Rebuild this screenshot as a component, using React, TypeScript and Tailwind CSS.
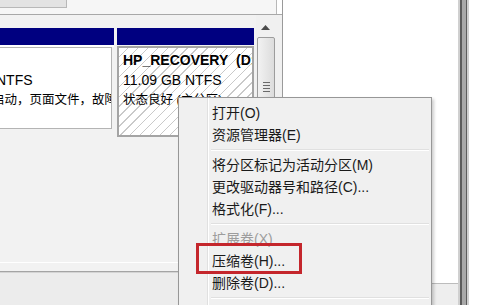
import React from 'react';

type MenuEntry =
  | { kind: 'item'; label: string; disabled?: boolean }
  | { kind: 'sep' };

const menu: MenuEntry[] = [
  { kind: 'item', label: '打开(O)' },
  { kind: 'item', label: '资源管理器(E)' },
  { kind: 'sep' },
  { kind: 'item', label: '将分区标记为活动分区(M)' },
  { kind: 'item', label: '更改驱动器号和路径(C)...' },
  { kind: 'item', label: '格式化(F)...' },
  { kind: 'sep' },
  { kind: 'item', label: '扩展卷(X)', disabled: true },
  { kind: 'item', label: '压缩卷(H)...' },
  { kind: 'item', label: '删除卷(D)...' },
  { kind: 'sep' },
];

const font = 'font-["Liberation_Sans","Noto_Sans_CJK_SC",sans-serif]';

function ScrollBar() {
  return (
    <div className="w-[26px] flex flex-col items-start bg-[#f0f0f0]">
      <div className="h-[22px] w-[18px] flex items-center justify-center pt-[2px]">
        <svg width="9" height="5" viewBox="0 0 9 5">
          <path d="M0 5 L4.5 0 L9 5 Z" fill="#4a4a4a" />
        </svg>
      </div>
      <div className="ml-[1px] w-[18px] h-[200px] rounded-[2px] border border-[#9c9c9c] bg-[linear-gradient(90deg,#f2f2f2,#dcdcdc)] flex flex-col items-center pt-[44px] gap-[2px]">
        <div className="w-[7px] h-[1px] bg-[#6a6a6a]" />
        <div className="w-[7px] h-[1px] bg-[#6a6a6a]" />
        <div className="w-[7px] h-[1px] bg-[#6a6a6a]" />
        <div className="w-[7px] h-[1px] bg-[#6a6a6a]" />
      </div>
    </div>
  );
}

function DiskArea() {
  return (
    <div className="w-[256px] flex flex-col bg-[#f2f2f2]">
      <div className="h-[13px]" />
      <div className="flex gap-[3px] items-start bg-[#f2f2f2]">
        {/* left partition, scrolled partly out of view */}
        <div className="w-[114px] flex flex-col">
          <div className="h-[17px] bg-[#000080]" />
          <div className="h-[2px] bg-white" />
          <div className="h-[82px] w-[112px] bg-white border-t border-r border-b border-[#b4b4b4] overflow-hidden pt-[2px] leading-[20px] whitespace-nowrap text-black">
            <div className="h-[20px]" />
            <div className="text-[14px] -ml-[4px]">NTFS</div>
            <div className="text-[12.5px] -ml-[8px]">启动，页面文件，故障转储</div>
          </div>
        </div>
        {/* selected partition */}
        <div className="w-[137px] flex flex-col">
          <div className="h-[17px] bg-[#000080]" />
          <div className="h-[1px] bg-[#f2f2f2]" />
          <div className="h-[91px] border-2 border-[#a4a4a4] bg-white bg-[repeating-linear-gradient(135deg,#ffffff_0px,#ffffff_6px,#c9c9c9_6px,#c9c9c9_7px)] overflow-hidden pl-[4px] pt-[2px] leading-[20px] whitespace-nowrap text-black">
            <div className="text-[14px] font-bold">HP_RECOVERY&nbsp;&nbsp;(D:)</div>
            <div className="text-[14px]">11.09 GB NTFS</div>
            <div className="text-[12.5px]">状态良好 (主分区)</div>
          </div>
        </div>
      </div>
    </div>
  );
}

function ContextMenu() {
  return (
    <div className={`absolute left-[178px] top-[97px] w-[254px] h-[230px] bg-[#f0f0f0] border border-[#979797] shadow-[2px_2px_3px_rgba(0,0,0,0.2)] ${font}`}>
      <div className="relative flex h-full">
        <div className="w-[28px] shrink-0" />
        <div className="w-[1px] bg-[#e0e0e0] shrink-0" />
        <div className="w-[1px] bg-white shrink-0" />
        <div className="flex-1 flex flex-col pt-[4px] pr-[2px]">
          {menu.map((m, i) =>
            m.kind === 'sep' ? (
              <div key={i} className="h-[8px] flex flex-col justify-center pl-[2px]">
                <div className="h-[1px] bg-[#e0e0e0]" />
                <div className="h-[1px] bg-white" />
              </div>
            ) : (
              <div
                key={i}
                className={`h-[22px] flex items-center pl-[3px] text-[14px] ${m.disabled ? 'text-[#9d9d9d]' : 'text-[#1a1a1a]'}`}
              >
                {m.label}
              </div>
            )
          )}
        </div>
        {/* annotation box */}
        <div className="absolute left-[17px] top-[145px] w-[106px] h-[31px] border-[3px] border-[#c4262c]" />
      </div>
    </div>
  );
}

export default function App() {
  return (
    <div className={`relative w-[500px] h-[305px] overflow-hidden bg-white flex ${font}`}>
      {/* left pane */}
      <div className="w-[283px] flex flex-col border-r border-[#9a9a9a] bg-[#f2f2f2]">
        <div className="h-[15px] flex items-start bg-[#f6f6f6] border-b border-[#a8a8a8]">
          <div className="w-[67px] h-[8px] bg-[#e3e3e3] border-b border-r border-[#b8b8b8]" />
          <div className="flex-1" />
          <div className="w-[6px] h-full border-l border-[#b8b8b8] bg-white" />
        </div>
        <div className="flex h-[247px]">
          <DiskArea />
          <ScrollBar />
        </div>
        <div className="h-[1px] bg-white" />
        <div className="h-[8px]" />
        <div className="h-[1px] bg-[#a4a4a4]" />
        <div className="h-[1px] bg-[#d4d4d4]" />
        <div className="flex-1 bg-[#ececec]" />
      </div>
      {/* middle pane */}
      <div className="w-[175px] flex flex-col">
        <div className="h-[283px] bg-white" />
        <div className="h-[1px] bg-[#bcbcbc]" />
        <div className="flex-1 bg-[#eeeeee]" />
      </div>
      {/* splitter */}
      <div className="flex">
        <div className="w-[2px] bg-[#d0d0d0]" />
        <div className="w-[2px] bg-[#5c5c5c]" />
        <div className="w-[4px] bg-[#a9a9a9]" />
        <div className="w-[1px] bg-[#5c5c5c]" />
        <div className="w-[2px] bg-[#d0d0d0]" />
      </div>
      <div className="flex-1 bg-white" />
      <ContextMenu />
    </div>
  );
}
